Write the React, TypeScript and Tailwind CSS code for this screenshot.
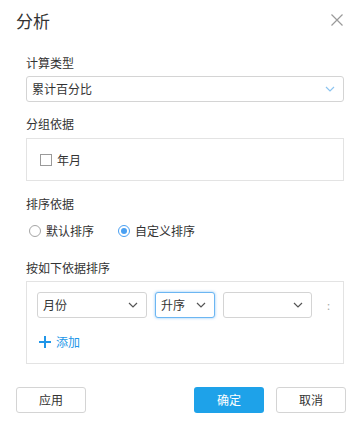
import { useState } from 'react';

function Chevron({ className }: { className?: string }) {
    return (
        <svg width="10" height="6" viewBox="0 0 10 6" className={className} fill="none">
            <path d="M1 1l4 4 4-4" stroke="currentColor" strokeWidth="1.2" />
        </svg>
    );
}

function SmallSelect({ value, width, focused }: { value: string; width: string; focused?: boolean }) {
    return (
        <div
            className={cn(
                'h-[26px] flex items-center justify-between pl-[5px] pr-[8px] rounded-[3px] border bg-white text-[12px] text-[#333]',
                width,
                focused ? 'border-[#6cb6f2] shadow-[0_0_3px_rgba(66,160,240,0.6)]' : 'border-[#d4d4d4]'
            )}
        >
            <span>{value}</span>
            <Chevron className="text-[#555]" />
        </div>
    );
}

export default function App() {
    const [sortMode, setSortMode] = useState<'default' | 'custom'>('custom');

    return (
        <div className="w-[363px] h-[429px] bg-white text-[#333] font-['Noto_Sans_CJK_SC','Noto_Sans',sans-serif] overflow-hidden">
            {/* Header */}
            <div className="h-[40px] flex items-center justify-between pl-[16px] pr-[20px]">
                <span className="text-[17px] leading-none text-[#333]">分析</span>
                <svg width="12" height="12" viewBox="0 0 12 12" className="text-[#9a9a9a]">
                    <path d="M0.5 0.5l11 11M11.5 0.5l-11 11" stroke="currentColor" strokeWidth="1.2" />
                </svg>
            </div>

            <div className="pl-[26px] pr-[19px]">
                <div className="mt-[14px] h-[18px] text-[12px] leading-[18px]">计算类型</div>
                <div className="mt-[4px] h-[26px] flex items-center justify-between pl-[5px] pr-[8px] border border-[#d4d4d4] rounded-[3px] text-[12px]">
                    <span>累计百分比</span>
                    <Chevron className="text-[#8cc4f0]" />
                </div>

                <div className="mt-[13px] h-[18px] text-[12px] leading-[18px]">分组依据</div>
                <div className="mt-[5px] h-[43px] border border-[#e3e3e3] flex items-center pl-[13px]">
                    <div className="w-[12px] h-[12px] border border-[#9a9a9a] bg-white" />
                    <span className="ml-[5px] text-[12px]">年月</span>
                </div>

                <div className="mt-[14px] h-[18px] text-[12px] leading-[18px]">排序依据</div>
                <div className="mt-[9px] h-[18px] flex items-center pl-[3px] text-[12px]">
                    <button className="flex items-center" onClick={() => setSortMode('default')}>
                        <Radio checked={sortMode === 'default'} />
                        <span className="ml-[5px]">默认排序</span>
                    </button>
                    <button className="flex items-center ml-[24px]" onClick={() => setSortMode('custom')}>
                        <Radio checked={sortMode === 'custom'} />
                        <span className="ml-[5px]">自定义排序</span>
                    </button>
                </div>

                <div className="mt-[19px] h-[18px] text-[12px] leading-[18px]">按如下依据排序</div>
                <div className="mt-[4px] h-[83px] border border-[#e3e3e3] pl-[10px] pt-[10px] overflow-hidden">
                    <div className="flex items-center">
                        <SmallSelect value="月份" width="w-[110px]" />
                        <div className="ml-[8px]">
                            <SmallSelect value="升序" width="w-[60px]" focused />
                        </div>
                        <div className="ml-[8px]">
                            <SmallSelect value="" width="w-[89px]" />
                        </div>
                        <span className="ml-[15px] text-[11px] text-[#aaa] leading-none">:</span>
                    </div>
                    <div className="mt-[15px] flex items-center pl-[2px] text-[#2196e8]">
                        <svg width="12" height="12" viewBox="0 0 12 12">
                            <path d="M6 0v12M0 6h12" stroke="currentColor" strokeWidth="2" />
                        </svg>
                        <span className="ml-[5px] text-[12px]">添加</span>
                    </div>
                </div>
            </div>

            {/* Footer */}
            <div className="mt-[23px] flex items-center pl-[16px] pr-[17px] text-[12px]">
                <button className="w-[70px] h-[26px] border border-[#d4d4d4] rounded-[3px] bg-white">应用</button>
                <div className="flex-1" />
                <button className="w-[70px] h-[26px] rounded-[3px] bg-[#1ea2e9] text-white">确定</button>
                <button className="ml-[12px] w-[70px] h-[26px] border border-[#d4d4d4] rounded-[3px] bg-white">取消</button>
            </div>
        </div>
    );
}

function Radio({ checked }: { checked: boolean }) {
    return checked ? (
        <span className="w-[12px] h-[12px] rounded-full border border-[#4aa0f2] flex items-center justify-center">
            <span className="w-[6px] h-[6px] rounded-full bg-[#4aa0f2]" />
        </span>
    ) : (
        <span className="w-[12px] h-[12px] rounded-full border border-[#a5a5a5] bg-white" />
    );
}

function cn(...classes: any[]) {
    return classes.filter(Boolean).join(' ');
}
